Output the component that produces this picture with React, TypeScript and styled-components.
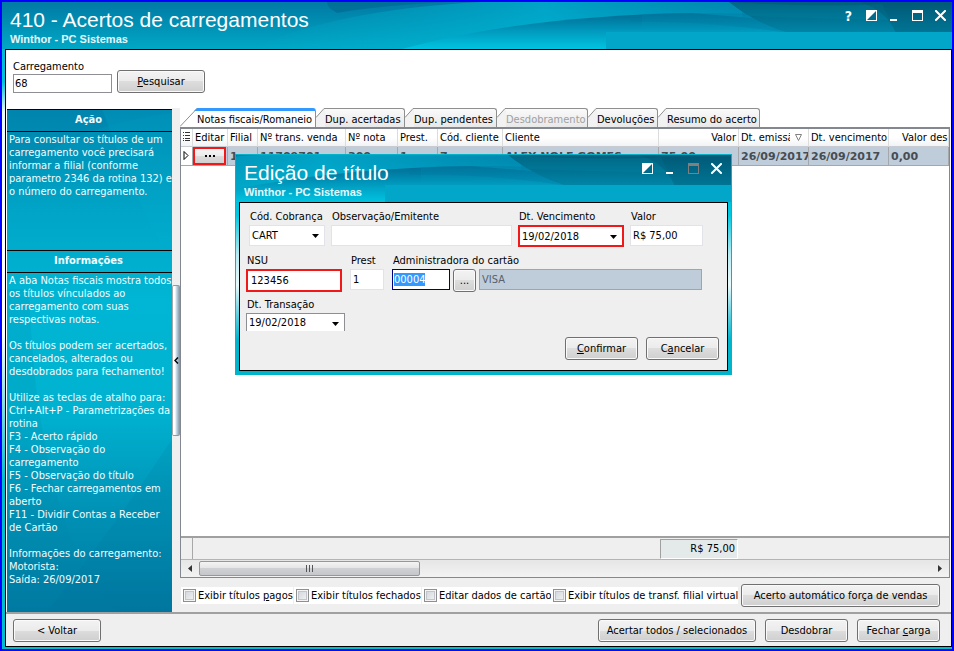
import React, { useEffect, useRef } from "react";
import styled, { createGlobalStyle, css } from "styled-components";

const sans = `"DejaVu Sans Condensed", "Noto Sans", sans-serif`;
const arial = `"Liberation Sans", Arial, sans-serif`;
const steel = "#bfcddb";

const GlobalStyle = createGlobalStyle`
  *, *::before, *::after { box-sizing: border-box; }
  body { margin: 0; font: 11px/13px ${sans}; color: #000; }
  button, input, select { font: inherit; color: inherit; margin: 0; }
  ::selection { background: #3399ff; color: #fff; }
`;

/* ---------- window chrome ---------- */

const Frame = styled.div`
  position: relative;
  display: flex;
  flex-direction: column;
  min-height: 100vh;
  border: 2px solid #0000ff;
  background: linear-gradient(180deg, #00a6c8 0, #00c4dc 80px, #e8fafc 110px, #fff 250px, #fff 330px, #00bccc 480px);
`;

const TitleBar = styled.header<{ $inset?: boolean }>`
  position: relative;
  display: flex;
  justify-content: space-between;
  align-items: flex-start;
  height: 47px;
  padding-left: 8px;
  padding-right: ${(p) => (p.$inset ? 3 : 0)}px;
  overflow: hidden;
  background: #0090b4;
  color: #fff;
`;

const Backdrop = styled.svg`
  position: absolute;
  top: 0;
  right: 0;
`;

const Titles = styled.div`
  position: relative;
  padding-top: 6px;
  font-family: ${arial};
`;

const Title = styled.h1`
  margin: 0;
  font-size: 21px;
  line-height: 24px;
  font-weight: normal;
  white-space: nowrap;
`;

const Subtitle = styled.p`
  margin: 0;
  font-size: 11px;
  line-height: 14px;
  font-weight: bold;
  color: #e4f8fc;
`;

const WindowControls = styled.div`
  position: relative;
  display: flex;
`;

const ControlButton = styled.button`
  display: flex;
  align-items: center;
  justify-content: center;
  width: 23px;
  height: 27px;
  padding: 0;
  border: 0;
  background: none;
  color: #fff;
  &:disabled { color: #7f7f7f; }
`;

function Swoosh({ id }: { id: string }) {
  return (
    <Backdrop width="950" height="47" viewBox="0 0 950 47" aria-hidden="true">
      <defs>
        <linearGradient id={`${id}-base`} x1="0" y1="0" x2="0" y2="1">
          <stop offset="0" stopColor="#007aa4" />
          <stop offset="1" stopColor="#00a8c6" />
        </linearGradient>
        <linearGradient id={`${id}-glow`} x1="0" y1="0" x2="1" y2="0">
          <stop offset="0" stopColor="#00b8d4" stopOpacity="0" />
          <stop offset="0.6" stopColor="#00b4d4" stopOpacity="0.7" />
          <stop offset="1" stopColor="#00a4c8" stopOpacity="0.3" />
        </linearGradient>
        <linearGradient id={`${id}-wave`} gradientUnits="userSpaceOnUse" x1="0" y1="13" x2="0" y2="47">
          <stop offset="0" stopColor="#007098" />
          <stop offset="0.5" stopColor="#009cc0" />
          <stop offset="1" stopColor="#00c4e0" />
        </linearGradient>
        <linearGradient id={`${id}-dark`} x1="0" y1="0" x2="0" y2="1">
          <stop offset="0" stopColor="#005e7c" />
          <stop offset="1" stopColor="#0086a8" />
        </linearGradient>
        <linearGradient id={`${id}-mid`} x1="0" y1="0" x2="0" y2="1">
          <stop offset="0" stopColor="#007ca2" />
          <stop offset="1" stopColor="#009cc0" />
        </linearGradient>
      </defs>
      <rect width="950" height="47" fill={`url(#${id}-base)`} />
      <path d="M325 0H450Q380 3 335 11Q325 6 325 0Z" fill="#00688e" opacity="0.6" />
      <path d="M250 47Q330 8 480 0H740V20Q560 8 403 47Z" fill={`url(#${id}-glow)`} />
      <path d="M400 47Q520 14 690 11L800 20V47Z" fill={`url(#${id}-wave)`} />
      <path d="M640 12Q700 9 800 14V31H640Z" fill={`url(#${id}-mid)`} opacity="0.5" />
      <path d="M727 0H950V31H788Q758 24 727 0Z" fill={`url(#${id}-dark)`} />
      <path d="M727 0Q820 6 880 2L888 18Q800 16 748 14Z" fill="#0090b0" opacity="0.2" />
      <path d="M858 0Q884 8 894 31H950V0Z" fill="#004e6a" opacity="0.3" />
      <path d="M628 14Q690 10 752 17L788 31Q700 18 628 20Z" fill="#0078a0" opacity="0.3" />
      <rect x="604" y="30" width="346" height="17" fill="#02a6c9" />
    </Backdrop>
  );
}

const ContrastIcon = () => (
  <svg width="11" height="11" viewBox="0 0 11 11" aria-hidden="true">
    <path d="M0 0H11V11H0Z" fill="currentColor" />
    <path d="M10 1V10H1Z" fill="#006a8a" />
  </svg>
);
const MinimizeIcon = () => (
  <svg width="11" height="11" viewBox="0 0 11 11" aria-hidden="true">
    <path d="M1 9H8V11H1Z" fill="currentColor" />
  </svg>
);
const MaximizeIcon = () => (
  <svg width="11" height="11" viewBox="0 0 11 11" aria-hidden="true">
    <path d="M0 0H11V11H0ZM1 3V10H10V3Z" fill="currentColor" fillRule="evenodd" />
  </svg>
);
const CloseIcon = () => (
  <svg width="11" height="11" viewBox="0 0 11 11" aria-hidden="true">
    <path d="M1 1L10 10M10 1L1 10" stroke="currentColor" strokeWidth="2" strokeLinecap="square" />
  </svg>
);
const HelpMark = styled.span`
  font: bold 14px/16px ${sans};
`;

function Chrome({ id, title, help, fixed }: { id: string; title: string; help?: boolean; fixed?: boolean }) {
  return (
    <TitleBar $inset={fixed}>
      <Swoosh id={id} />
      <Titles>
        <Title id={`${id}-title`}>{title}</Title>
        <Subtitle>Winthor - PC Sistemas</Subtitle>
      </Titles>
      <WindowControls>
        {help && <ControlButton aria-label="Ajuda"><HelpMark>?</HelpMark></ControlButton>}
        <ControlButton aria-label="Contraste"><ContrastIcon /></ControlButton>
        <ControlButton aria-label="Minimizar"><MinimizeIcon /></ControlButton>
        <ControlButton aria-label="Maximizar" disabled={fixed}><MaximizeIcon /></ControlButton>
        <ControlButton aria-label="Fechar"><CloseIcon /></ControlButton>
      </WindowControls>
    </TitleBar>
  );
}

/* ---------- shared controls ---------- */

const PushButton = styled.button<{ $width: number }>`
  flex: none;
  width: ${(p) => p.$width}px;
  height: 23px;
  padding: 0;
  border: 1px solid #707070;
  border-radius: 3px;
  background: linear-gradient(#f3f3f3, #ebebeb 50%, #dddddd 50%, #cfcfcf);
  box-shadow: inset 0 0 0 1px #fafafa;
  white-space: nowrap;
`;

const TextBox = styled.input<{ $tone?: "red" | "navy" | "steel" | "gray" }>`
  width: 100%;
  min-width: 0;
  height: 21px;
  padding: 0 2px;
  border: 1px solid #e2e3ea;
  border-radius: 0;
  background: #fff;
  outline: 0;
  ${(p) => p.$tone === "red" && css`height: 23px; border: 2px solid #f01818; padding: 0 3px;`}
  ${(p) => p.$tone === "navy" && css`border-color: #000080; padding: 0 1px;`}
  ${(p) => p.$tone === "steel" && css`border-color: #a0a4ac; background: ${steel}; color: #56616c;`}
  ${(p) => p.$tone === "gray" && css`border-color: #8e8f94; height: 19px; padding: 0 1px;`}
`;

const SelectWrap = styled.span<{ $tone?: "red" | "date" }>`
  position: relative;
  display: flex;
  height: 21px;
  border: 1px solid #e2e3ea;
  background: #fff;
  ${(p) => p.$tone === "red" && css`height: 22px; border: 2px solid #f01818;`}
  ${(p) => p.$tone === "date" && css`height: 18px; border-color: #8e8f94; border-bottom: 0;`}
`;

const Select = styled.select`
  appearance: none;
  flex: 1;
  min-width: 0;
  padding: 0 2px;
  border: 0;
  background: none;
  outline: 0;
`;

const Arrow = styled.svg`
  position: absolute;
  right: 5px;
  top: 8px;
  pointer-events: none;
`;

function Dropdown({ id, value, tone }: { id: string; value: string; tone?: "red" | "date" }) {
  return (
    <SelectWrap $tone={tone}>
      <Select id={id} defaultValue={value}><option>{value}</option></Select>
      <Arrow width="7" height="4" viewBox="0 0 7 4" aria-hidden="true"><path d="M0 0H7L3.5 4Z" /></Arrow>
    </SelectWrap>
  );
}

/* ---------- body ---------- */

const Body = styled.main`
  flex: 1;
  display: flex;
  flex-direction: column;
  margin: 0 0 2px 3px;
  border: 1px solid #000;
  background: #fff;
`;

const SearchBar = styled.form`
  display: flex;
  align-items: flex-end;
  gap: 5px;
  height: 58px;
  padding: 0 0 15px 7px;
`;

const SearchField = styled.div`
  display: flex;
  flex-direction: column;
  gap: 1px;
  width: 99px;
`;

const Workspace = styled.div`
  flex: 1;
  display: flex;
  min-height: 0;
`;

const Sidebar = styled.aside`
  position: relative;
  flex: none;
  width: 165px;
  margin-top: 1px;
  margin-left: 1px;
  color: #f2fcff;
  background: #00a8c8;
`;

const SidebarArt = styled.svg`
  position: absolute;
  inset: 0;
  width: 100%;
  height: 100%;
`;

const SidebarContent = styled.div`
  position: relative;
`;

const PanelTitle = styled.h2`
  margin: 0;
  height: 23px;
  border-top: 1px solid #000;
  border-bottom: 1px solid #000;
  padding-right: 2px;
  font: bold 11px/20px ${sans};
  text-align: center;
`;

const PanelText = styled.div<{ $tall?: boolean }>`
  padding: 1px 0 0 2px;
  min-height: ${(p) => (p.$tall ? 118 : 0)}px;
  white-space: pre;
`;

const Splitter = styled.div`
  flex: none;
  display: flex;
  flex-direction: column;
  justify-content: center;
  width: 8px;
  background: #efefef;
`;

const SplitterGrip = styled.button`
  display: flex;
  align-items: center;
  justify-content: center;
  height: 151px;
  padding: 0;
  border: 1px solid #8e97a2;
  border-left-color: #a8a8a8;
  border-radius: 2px;
  background: linear-gradient(90deg, #fff 0, #fff 2px, #cfe4f4 3px, #8f9fae 100%);
`;

const Content = styled.section`
  flex: 1;
  min-width: 0;
  display: flex;
  flex-direction: column;
  margin-right: 1px;
`;

const Tabs = styled.div`
  display: flex;
  height: 19px;
`;

const TabButton = styled.button<{ $width: number; $active?: boolean }>`
  display: flex;
  width: ${(p) => p.$width}px;
  height: 19px;
  padding: 0;
  border: 0;
  background: none;
  text-align: left;
  &:disabled { color: #a0a0a0; }
`;

const TabSlant = styled.svg`
  flex: none;
`;

const TabLabel = styled.span<{ $active?: boolean }>`
  flex: 1;
  height: 19px;
  line-height: 22px;
  border-top: 1px solid #8e8f8f;
  border-right: 1px solid #8e8f8f;
  border-top-right-radius: 3px;
  background: linear-gradient(#fafafa, #e8e8e8);
  white-space: nowrap;
  ${(p) => p.$active && css`background: #fff; border-top: 3px solid #3399ff; line-height: 18px;`}
`;

function Tab({ label, width, active, disabled }: { label: string; width: number; active?: boolean; disabled?: boolean }) {
  const w = active ? 17 : 9;
  return (
    <TabButton role="tab" aria-selected={!!active} $width={width} disabled={disabled}>
      <TabSlant width={w} height="19" viewBox={`0 0 ${w} 19`} aria-hidden="true">
        {active ? (
          <>
            <path d="M0 19L17 0V19Z" fill="#fff" />
            <path d="M14 3L17 0V3Z" fill="#3399ff" />
            <path d="M0 18.500L17 0.500" stroke="#8e8f8f" fill="none" />
          </>
        ) : (
          <>
            <path d="M0 9L9 0V19H0Z" fill="#f2f2f2" />
            <path d="M0 9.500L8 0.500H9" stroke="#8e8f8f" fill="none" />
          </>
        )}
      </TabSlant>
      <TabLabel $active={active}>{label}</TabLabel>
    </TabButton>
  );
}

const Grid = styled.div`
  flex: 1;
  display: flex;
  flex-direction: column;
  border: 1px solid #828790;
  border-top-width: 2px;
  background: #fff;
  overflow: hidden;
`;

const GridScroll = styled.div`
  flex: 1;
  overflow: hidden;
`;

const Table = styled.table`
  width: 100%;
  table-layout: fixed;
  border-collapse: separate;
  border-spacing: 0;
`;

const HeadCell = styled.th<{ $right?: boolean }>`
  height: 18px;
  padding: 0 2px;
  border-right: 1px solid #dcdcdc;
  border-bottom: 1px solid #c8ccd2;
  background: linear-gradient(#fff 50%, #f1f2f4);
  font-weight: normal;
  text-align: ${(p) => (p.$right ? "right" : "left")};
  white-space: nowrap;
  overflow: hidden;
`;

const HeadLabel = styled.span<{ $clip?: boolean; $lead?: boolean }>`
  display: inline-block;
  vertical-align: middle;
  overflow: hidden;
  ${(p) => p.$clip && css`width: 49px;`}
  ${(p) => p.$lead && css`padding-left: 11px;`}
`;

const SortIcon = styled.svg`
  margin-left: 5px;
  vertical-align: middle;
`;

const Cell = styled.td<{ $plain?: boolean }>`
  height: 19px;
  padding: 0 2px;
  border-right: 1px solid #a4a8ac;
  border-bottom: 1px solid #a4a8ac;
  background: ${(p) => (p.$plain ? "#fff" : steel)};
  color: #474c52;
  font-family: "DejaVu Sans", "Noto Sans", sans-serif;
  font-weight: bold;
  white-space: nowrap;
  overflow: hidden;
`;

const EditCell = styled(Cell)`
  padding: 0;
`;

const MoreButton = styled.button`
  display: flex;
  align-items: center;
  justify-content: center;
  width: 33px;
  height: 18px;
  padding: 0;
  border: 2px solid #f01818;
  background: linear-gradient(#f6f6f6, #ebebeb 50%, #dcdcdc 50%, #d0d0d0);
`;

const Summary = styled.div`
  display: grid;
  grid-template-columns: 12px 1fr 78px 211px;
  height: 23px;
  border-top: 2px solid #a0a0a0;
  background: #efefef;
`;

const SummaryEdge = styled.div`
  border-right: 1px solid #a8a8a8;
`;

const SummaryTotal = styled.output`
  grid-column: 3;
  margin: 1px 0;
  padding-right: 2px;
  border: 1px solid #a0a0a0;
  border-right-color: #fff;
  border-bottom-color: #fff;
  background: #e4e9ea;
  line-height: 18px;
  text-align: right;
`;

const ScrollBar = styled.div`
  display: flex;
  align-items: center;
  justify-content: space-between;
  height: 18px;
  border-top: 1px solid #b4b4b4;
  background: linear-gradient(#e6e6e6, #f2f2f2);
`;

const ScrollTrack = styled.div`
  flex: 1;
  display: flex;
`;

const ScrollThumb = styled.div`
  display: flex;
  align-items: center;
  justify-content: center;
  width: 221px;
  height: 15px;
  border: 1px solid #979797;
  border-radius: 2px;
  background: linear-gradient(#f4f4f4, #e4e4e6 50%, #cfd0d4 50%, #c6c7cb);
`;

const ScrollArrow = styled.button`
  display: flex;
  align-items: center;
  justify-content: center;
  width: 18px;
  height: 16px;
  padding: 0;
  border: 0;
  background: none;
`;

const Options = styled.div`
  display: grid;
  grid-template-columns: 113px 128px 129px 1fr auto;
  align-items: center;
  height: 34px;
  padding: 1px 10px 0 1px;
  background: #efefef;
`;

const CheckLabel = styled.label`
  display: flex;
  align-items: center;
  justify-self: start;
  gap: 2px;
  height: 17px;
  padding-left: 2px;
  background: #fff;
  white-space: nowrap;
`;

const CheckBox = styled.input`
  appearance: none;
  flex: none;
  width: 13px;
  height: 13px;
  border: 1px solid #8e8f8f;
  background: linear-gradient(135deg, #cdd2d8, #f6f6f6);
  box-shadow: inset 0 0 0 1px #f4f4f4, inset 0 0 0 2px #c2c6cc;
  &:checked { background: #3399ff; }
`;

const Footer = styled.footer`
  display: flex;
  align-items: center;
  justify-content: space-between;
  height: 34px;
  padding: 0 11px 0 7px;
  border-top: 2px solid #a0a0a0;
  background: #efefef;
`;

const FooterActions = styled.div`
  display: flex;
  gap: 9px;
`;

/* ---------- dialog ---------- */

const Dialog = styled.section`
  position: absolute;
  top: 152px;
  left: 233px;
  width: 497px;
  border: 1px solid #00b4cc;
  background: linear-gradient(180deg, #00a6c8 0, #00c8e0 60px, #b8ecf4 100px, #e8fafc 130px, #60d0e0 160px, #00b4cc 185px);
`;

const DialogForm = styled.form`
  display: flex;
  flex-direction: column;
  margin: 0 3px 3px;
  padding: 7px 8px 10px 6px;
  border: 1px solid #000;
  background: #efefef;
`;

const FormRow = styled.div<{ $indent?: boolean; $short?: boolean }>`
  display: flex;
  gap: ${(p) => (p.$indent ? 6 : 8)}px;
  height: ${(p) => (p.$short ? 39 : 44)}px;
  padding-left: ${(p) => (p.$indent ? 3 : 0)}px;
`;

const Field = styled.div<{ $width: number }>`
  display: flex;
  flex-direction: column;
  gap: 1px;
  width: ${(p) => p.$width}px;
  label { line-height: 14px; padding-left: 1px; white-space: nowrap; }
`;

const Controls = styled.div`
  display: grid;
  grid-template-columns: 58px 23px 1fr;
  gap: 3px;
`;

const DialogActions = styled.div`
  display: flex;
  justify-content: flex-end;
  gap: 8px;
`;

const columns = [12, 35, 30, 88, 52, 40, 65, 156, 80, 70, 80];

const accessKey = (before: string, key: string, after: string) => (
  <>{before}<u>{key}</u>{after}</>
);

function EditDialog() {
  const admin = useRef<HTMLInputElement>(null);
  useEffect(() => {
    admin.current?.focus();
    admin.current?.select();
  }, []);
  return (
    <Dialog role="dialog" aria-labelledby="edit-title">
      <Chrome id="edit" title="Edição de título" fixed />
      <DialogForm onSubmit={(e) => e.preventDefault()}>
        <FormRow $indent>
          <Field $width={76}>
            <label htmlFor="cob">Cód. Cobrança</label>
            <Dropdown id="cob" value="CART" />
          </Field>
          <Field $width={181}>
            <label htmlFor="obs">Observação/Emitente</label>
            <TextBox id="obs" />
          </Field>
          <Field $width={106}>
            <label htmlFor="venc">Dt. Vencimento</label>
            <Dropdown id="venc" value="19/02/2018" tone="red" />
          </Field>
          <Field $width={73}>
            <label htmlFor="valor">Valor</label>
            <TextBox id="valor" defaultValue="R$ 75,00" />
          </Field>
        </FormRow>
        <FormRow>
          <Field $width={96}>
            <label htmlFor="nsu">NSU</label>
            <TextBox id="nsu" $tone="red" defaultValue="123456" />
          </Field>
          <Field $width={34}>
            <label htmlFor="prest">Prest</label>
            <TextBox id="prest" defaultValue="1" />
          </Field>
          <Field $width={310}>
            <label htmlFor="adm">Administradora do cartão</label>
            <Controls>
              <TextBox id="adm" ref={admin} $tone="navy" defaultValue="00004" />
              <PushButton type="button" $width={23} aria-label="Procurar administradora">...</PushButton>
              <TextBox aria-label="Nome da administradora" $tone="steel" readOnly defaultValue="VISA" />
            </Controls>
          </Field>
        </FormRow>
        <FormRow $short>
          <Field $width={99}>
            <label htmlFor="trans">Dt. Transação</label>
            <Dropdown id="trans" value="19/02/2018" tone="date" />
          </Field>
        </FormRow>
        <DialogActions>
          <PushButton $width={73}>{accessKey("", "C", "onfirmar")}</PushButton>
          <PushButton type="button" $width={73}>{accessKey("C", "a", "ncelar")}</PushButton>
        </DialogActions>
      </DialogForm>
    </Dialog>
  );
}

export default function App() {
  return (
    <>
      <GlobalStyle />
      <Frame>
        <Chrome id="main" title="410 - Acertos de carregamentos" help />
        <Body>
          <SearchBar onSubmit={(e) => e.preventDefault()}>
            <SearchField>
              <label htmlFor="carga">Carregamento</label>
              <TextBox id="carga" $tone="gray" defaultValue="68" />
            </SearchField>
            <PushButton $width={88}>{accessKey("", "P", "esquisar")}</PushButton>
          </SearchBar>
          <Workspace>
            <Sidebar>
              <SidebarArt viewBox="0 0 165 503" preserveAspectRatio="none" aria-hidden="true">
                <defs>
                  <linearGradient id="side" x1="0" y1="0" x2="0" y2="1">
                    <stop offset="0" stopColor="#0088b0" />
                    <stop offset="0.2" stopColor="#00a4c6" />
                    <stop offset="0.38" stopColor="#00b6d4" />
                    <stop offset="0.6" stopColor="#00b2d0" />
                    <stop offset="0.8" stopColor="#0092b6" />
                    <stop offset="1" stopColor="#0078a0" />
                  </linearGradient>
                </defs>
                <rect width="165" height="503" fill="url(#side)" />
                <path d="M0 84Q40 20 165 4V0H0Z" fill="#0078a4" opacity="0.2" />
                <path d="M95 0Q140 120 165 150V0Z" fill="#00b0d0" opacity="0.2" />
                <path d="M22 180Q30 420 110 503H0V180Z" fill="#0080a8" opacity="0.16" />
                <path d="M165 330Q120 400 40 503H165Z" fill="#006c98" opacity="0.12" />
              </SidebarArt>
              <SidebarContent>
                <PanelTitle>Ação</PanelTitle>
                <PanelText $tall>{`Para consultar os títulos de um
carregamento você precisará
informar a filial (conforme
parametro 2346 da rotina 132) e
o número do carregamento.`}</PanelText>
                <PanelTitle>Informações</PanelTitle>
                <PanelText>{`A aba Notas fiscais mostra todos
os títulos vínculados ao
carregamento com suas
respectivas notas.

Os títulos podem ser acertados,
cancelados, alterados ou
desdobrados para fechamento!

Utilize as teclas de atalho para:
Ctrl+Alt+P - Parametrizações da
rotina
F3 - Acerto rápido
F4 - Observação do
carregamento
F5 - Observação do título
F6 - Fechar carregamentos em
aberto
F11 - Dividir Contas a Receber
de Cartão

Informações do carregamento:
Motorista:
Saída: 26/09/2017`}</PanelText>
              </SidebarContent>
            </Sidebar>
            <Splitter>
              <SplitterGrip aria-label="Recolher painel">
                <svg width="5" height="7" viewBox="0 0 5 7" aria-hidden="true">
                  <path d="M4 0.500L1 3.500L4 6.500" fill="none" stroke="#000" strokeWidth="1.500" />
                </svg>
              </SplitterGrip>
            </Splitter>
            <Content>
              <Tabs role="tablist">
                <Tab label="Notas fiscais/Romaneio" width={136} active />
                <Tab label="Dup. acertadas" width={89} />
                <Tab label="Dup. pendentes" width={92} />
                <Tab label="Desdobramento" width={91} disabled />
                <Tab label="Devoluções" width={70} />
                <Tab label="Resumo do acerto" width={102} />
              </Tabs>
              <Grid>
                <GridScroll>
                  <Table>
                    <colgroup>
                      {columns.map((w, i) => <col key={i} width={w} />)}
                      <col />
                    </colgroup>
                    <thead>
                      <tr>
                        <HeadCell aria-label="Seleção">
                          <svg width="7" height="9" viewBox="0 0 7 9" aria-hidden="true">
                            <path d="M0 0.500H1M2 0.500H7M0 3.500H1M2 3.500H7M0 6.500H1M2 6.500H7M0 8.500H1M2 8.500H7" stroke="#333" />
                          </svg>
                        </HeadCell>
                        <HeadCell>Editar</HeadCell>
                        <HeadCell>Filial</HeadCell>
                        <HeadCell>Nº trans. venda</HeadCell>
                        <HeadCell>Nº nota</HeadCell>
                        <HeadCell>Prest.</HeadCell>
                        <HeadCell>Cód. cliente</HeadCell>
                        <HeadCell>Cliente</HeadCell>
                        <HeadCell $right>Valor</HeadCell>
                        <HeadCell>
                          <HeadLabel $clip>Dt. emissão</HeadLabel>
                          <SortIcon width="7" height="7" viewBox="0 0 7 7" aria-hidden="true">
                            <path d="M0.500 0.500H6.500L3.500 6.500Z" fill="none" stroke="#808080" />
                          </SortIcon>
                        </HeadCell>
                        <HeadCell>Dt. vencimento</HeadCell>
                        <HeadCell><HeadLabel $lead>Valor desconto</HeadLabel></HeadCell>
                      </tr>
                    </thead>
                    <tbody>
                      <tr>
                        <Cell $plain>
                          <svg width="6" height="9" viewBox="0 0 6 9" aria-hidden="true">
                            <path d="M1 0.500L5 4.500L1 8.500Z" fill="none" stroke="#000" />
                          </svg>
                        </Cell>
                        <EditCell>
                          <MoreButton aria-label="Editar título">
                            <svg width="10" height="2" viewBox="0 0 10 2" aria-hidden="true">
                              <path d="M0 0H2V2H0ZM4 0H6V2H4ZM8 0H10V2H8Z" />
                            </svg>
                          </MoreButton>
                        </EditCell>
                        <Cell>1</Cell>
                        <Cell>11709701</Cell>
                        <Cell>300</Cell>
                        <Cell>1</Cell>
                        <Cell>7</Cell>
                        <Cell>ALEX NOLE GOMES</Cell>
                        <Cell>75,00</Cell>
                        <Cell>26/09/2017</Cell>
                        <Cell>26/09/2017</Cell>
                        <Cell>0,00</Cell>
                      </tr>
                    </tbody>
                  </Table>
                </GridScroll>
                <Summary>
                  <SummaryEdge />
                  <SummaryTotal>R$ 75,00</SummaryTotal>
                </Summary>
                <ScrollBar>
                  <ScrollArrow aria-label="Rolar para a esquerda">
                    <svg width="4" height="7" viewBox="0 0 4 7" aria-hidden="true"><path d="M4 0V7L0 3.500Z" fill="#333" /></svg>
                  </ScrollArrow>
                  <ScrollTrack>
                    <ScrollThumb>
                      <svg width="8" height="7" viewBox="0 0 8 7" aria-hidden="true">
                        <path d="M0.500 0V7M3.500 0V7M6.500 0V7" stroke="#555" />
                      </svg>
                    </ScrollThumb>
                  </ScrollTrack>
                  <ScrollArrow aria-label="Rolar para a direita">
                    <svg width="4" height="7" viewBox="0 0 4 7" aria-hidden="true"><path d="M0 0V7L4 3.500Z" fill="#333" /></svg>
                  </ScrollArrow>
                </ScrollBar>
              </Grid>
              <Options>
                <CheckLabel><CheckBox type="checkbox" /><span>{accessKey("Exibir títulos ", "p", "agos")}</span></CheckLabel>
                <CheckLabel><CheckBox type="checkbox" /><span>Exibir títulos fechados</span></CheckLabel>
                <CheckLabel><CheckBox type="checkbox" /><span>Editar dados de cartão</span></CheckLabel>
                <CheckLabel><CheckBox type="checkbox" /><span>Exibir títulos de transf. filial virtual</span></CheckLabel>
                <PushButton $width={199}>Acerto automático força de vendas</PushButton>
              </Options>
            </Content>
          </Workspace>
          <Footer>
            <PushButton $width={88}>&lt; Voltar</PushButton>
            <FooterActions>
              <PushButton $width={158}>Acertar todos / selecionados</PushButton>
              <PushButton $width={83}>Desdobrar</PushButton>
              <PushButton $width={83}>{accessKey("Fechar ", "c", "arga")}</PushButton>
            </FooterActions>
          </Footer>
        </Body>
        <EditDialog />
      </Frame>
    </>
  );
}
